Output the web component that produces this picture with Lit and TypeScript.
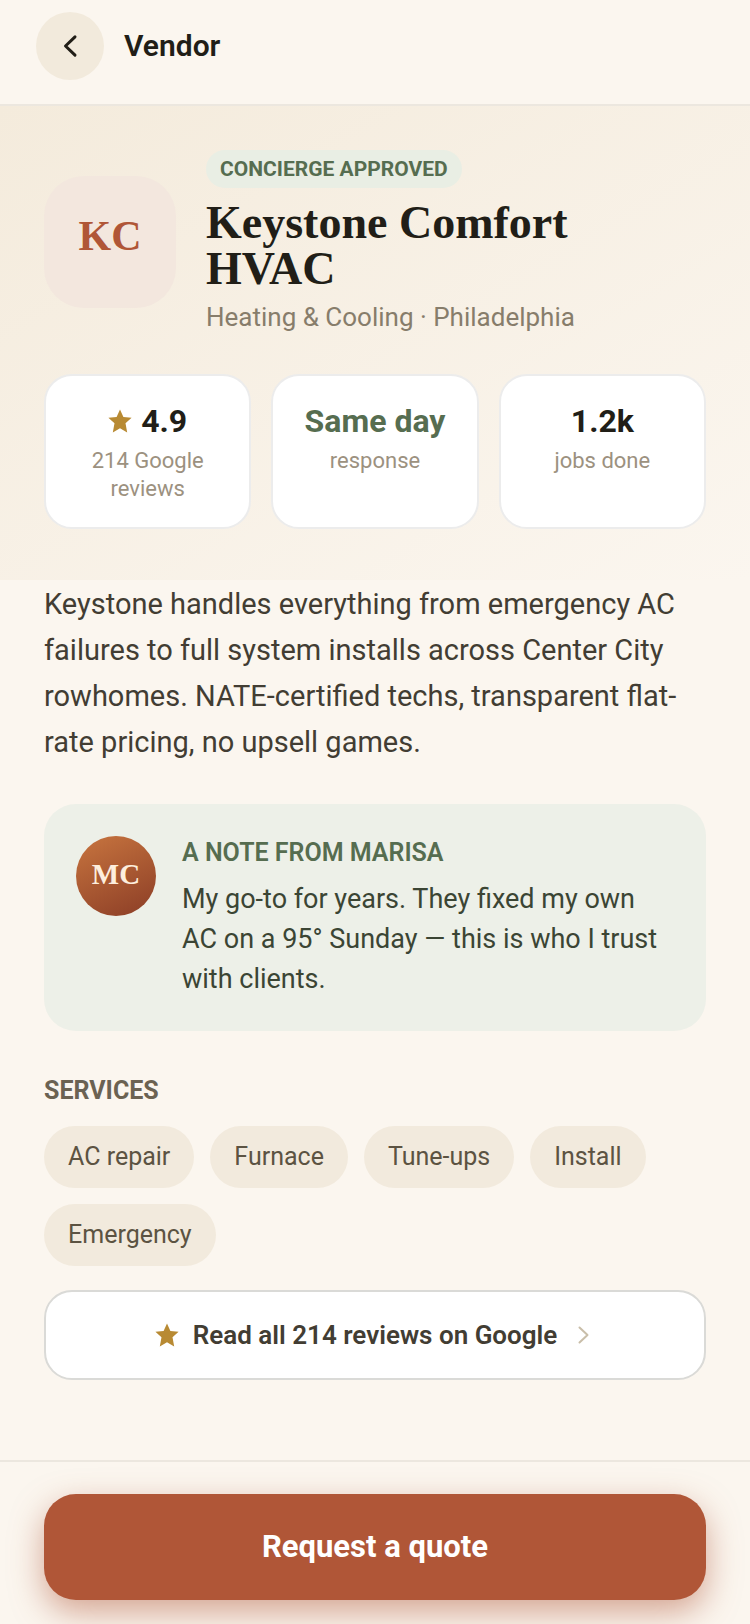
import { LitElement, html, svg, css } from "lit";
import { customElement, property } from "lit/decorators.js";

interface Stat {
  value: string;
  label: string;
  star?: boolean;
  positive?: boolean;
}

const STATS: Stat[] = [
  { value: "4.9", label: "214 Google reviews", star: true },
  { value: "Same day", label: "response", positive: true },
  { value: "1.2k", label: "jobs done" },
];

const SERVICES = ["AC repair", "Furnace", "Tune-ups", "Install", "Emergency"];

const starIcon = svg`
  <svg class="star" viewBox="0 0 24 24" width="24" height="24" aria-hidden="true">
    <path d="M12 0.4 15.4 7.9 23.6 8.7 17.5 14.3 19.2 23.4 12 19.2 4.8 23.4 6.5 14.3 0.4 8.7 8.6 7.9Z" />
  </svg>`;

@customElement("vendor-stat")
class VendorStat extends LitElement {
  @property({ attribute: false }) stat!: Stat;

  static styles = css`
    :host {
      display: block;
      box-sizing: border-box;
      padding: 24px;
      border: 2px solid #ececec;
      border-radius: 28px;
      background: #fff;
      text-align: center;
    }
    .value {
      display: flex;
      align-items: center;
      justify-content: center;
      gap: 9px;
      color: #211e17;
      font-size: 32px;
      font-weight: 700;
      line-height: 42px;
      white-space: nowrap;
    }
    .positive {
      color: #566d50;
    }
    .star {
      flex: none;
      fill: #b88a33;
    }
    .label {
      margin-top: 5px;
      color: #9c9180;
      font-size: 22px;
      line-height: 28px;
    }
  `;

  render() {
    const { value, label, star, positive } = this.stat;
    return html`
      <div class=${positive ? "value positive" : "value"}>
        ${star ? starIcon : null}<span>${value}</span>
      </div>
      <div class="label">${label}</div>
    `;
  }
}

@customElement("app-root")
class AppRoot extends LitElement {
  static styles = css`
    :host {
      display: flex;
      flex-direction: column;
      min-height: 100vh;
      overflow: hidden;
      background: #fbf6ef;
      color: #211e17;
      font-family: Roboto, "Liberation Sans", sans-serif;
    }
    h1,
    h2,
    p,
    ul {
      margin: 0;
      padding: 0;
    }
    button {
      border: 0;
      font-family: inherit;
      cursor: pointer;
    }

    .topbar {
      display: flex;
      align-items: center;
      gap: 20px;
      padding: 12px 36px 24px;
      border-bottom: 2px solid #ece7df;
    }
    .back {
      display: grid;
      place-items: center;
      width: 68px;
      height: 68px;
      padding: 0;
      border-radius: 50%;
      background: #f2eadc;
    }
    .back svg {
      fill: none;
      stroke: #211e17;
      stroke-width: 3;
      stroke-linecap: round;
      stroke-linejoin: round;
    }
    .page-name {
      font-size: 30px;
      font-weight: 600;
      line-height: 38px;
    }

    .hero {
      padding: 44px 44px 51px;
      background: linear-gradient(150deg, #f4ebdc, #fbf6ef);
    }
    .identity {
      display: flex;
      align-items: center;
      gap: 30px;
    }
    .monogram {
      display: grid;
      flex: none;
      place-items: center;
      width: 132px;
      height: 132px;
      padding-bottom: 12px;
      box-sizing: border-box;
      border-radius: 40px;
      background: #f3e7de;
      color: #b05637;
      font-family: "Liberation Serif", serif;
      font-size: 42px;
      font-weight: 600;
    }
    .badge {
      display: inline-block;
      padding: 0 14px;
      border-radius: 19px;
      background: #e9eee4;
      color: #566d50;
      font-size: 21px;
      font-weight: 700;
      line-height: 38px;
    }
    .name {
      margin-top: 12px;
      font-family: "Liberation Serif", serif;
      font-size: 46px;
      font-weight: 600;
      line-height: 46px;
    }
    .identity-text {
      max-width: 400px;
    }
    .trade {
      margin-top: 8px;
      color: #877d6b;
      font-size: 26px;
      line-height: 34px;
    }
    .stats {
      display: grid;
      grid-template-columns: repeat(3, 1fr);
      gap: 20px;
      margin-top: 40px;
    }

    .body {
      flex: 1;
      padding: 1px 44px 79px;
    }
    .about {
      color: #423d33;
      font-size: 29px;
      line-height: 46px;
    }
    .note {
      display: flex;
      align-items: flex-start;
      gap: 26px;
      margin-top: 39px;
      padding: 32px;
      border-radius: 32px;
      background: #edf0e8;
    }
    .avatar {
      display: grid;
      flex: none;
      place-items: center;
      width: 80px;
      height: 80px;
      padding-bottom: 4px;
      box-sizing: border-box;
      border-radius: 50%;
      background: linear-gradient(155deg, #c8753f, #8b3d26);
      color: #fdeedd;
      font-family: "Liberation Serif", serif;
      font-size: 29px;
      font-weight: 600;
    }
    .note-title {
      color: #566d50;
      font-size: 25px;
      font-weight: 600;
      line-height: 34px;
    }
    .note-text {
      margin-top: 9px;
      color: #3b4534;
      font-size: 27px;
      line-height: 40px;
    }
    .section-title {
      margin-top: 43px;
      color: #6b6252;
      font-size: 25px;
      font-weight: 700;
      line-height: 34px;
    }
    .chips {
      display: flex;
      flex-wrap: wrap;
      gap: 16px;
      margin-top: 18px;
      list-style: none;
    }
    .chip {
      padding: 0 24px;
      border-radius: 31px;
      background: #f2eadd;
      color: #5c5342;
      font-size: 25px;
      line-height: 62px;
    }
    .reviews {
      display: flex;
      align-items: center;
      justify-content: center;
      gap: 14px;
      margin-top: 24px;
      padding: 26px;
      border: 2px solid #dadad7;
      border-radius: 28px;
      background: #fff;
      color: #423d33;
      font-size: 26px;
      font-weight: 600;
      line-height: 34px;
      text-decoration: none;
    }
    .star {
      flex: none;
      fill: #b88a33;
    }
    .chevron {
      flex: none;
      fill: none;
      stroke: #c9bea9;
      stroke-width: 2;
      stroke-linecap: round;
      stroke-linejoin: round;
    }

    .action-bar {
      padding: 32px 44px 24px;
      border-top: 2px solid #ece7df;
    }
    .quote {
      display: block;
      width: 100%;
      padding: 32px;
      border-radius: 32px;
      background: #b05637;
      box-shadow: 0 12px 32px rgba(176, 86, 55, 0.5);
      color: #fff;
      font-size: 31px;
      font-weight: 700;
      line-height: 42px;
    }
  `;

  render() {
    return html`
      <header class="topbar">
        <button class="back" type="button" aria-label="Back">
          <svg viewBox="0 0 24 24" width="24" height="24"><path d="M17 2.8 7.5 12 17 21.2" /></svg>
        </button>
        <div class="page-name">Vendor</div>
      </header>

      <section class="hero">
        <div class="identity">
          <div class="monogram" aria-hidden="true">KC</div>
          <div class="identity-text">
            <span class="badge">CONCIERGE APPROVED</span>
            <h1 class="name">Keystone Comfort HVAC</h1>
            <p class="trade">Heating &amp; Cooling · Philadelphia</p>
          </div>
        </div>
        <div class="stats">
          ${STATS.map((stat) => html`<vendor-stat .stat=${stat}></vendor-stat>`)}
        </div>
      </section>

      <main class="body">
        <p class="about">
          Keystone handles everything from emergency AC failures to full system installs across
          Center City rowhomes. NATE-certified techs, transparent flat-rate pricing, no upsell
          games.
        </p>
        <aside class="note">
          <div class="avatar" aria-hidden="true">MC</div>
          <div>
            <h2 class="note-title">A NOTE FROM MARISA</h2>
            <p class="note-text">
              My go-to for years. They fixed my own AC on a 95° Sunday — this is who I trust with
              clients.
            </p>
          </div>
        </aside>
        <h2 class="section-title">SERVICES</h2>
        <ul class="chips">
          ${SERVICES.map((service) => html`<li class="chip">${service}</li>`)}
        </ul>
        <a class="reviews" href="#reviews">
          ${starIcon}
          <span>Read all 214 reviews on Google</span>
          <svg class="chevron" viewBox="0 0 24 24" width="24" height="24" aria-hidden="true">
            <path d="M8.5 4.5 16.5 12 8.5 19.5" />
          </svg>
        </a>
      </main>

      <footer class="action-bar">
        <button class="quote" type="button">Request a quote</button>
      </footer>
    `;
  }
}
